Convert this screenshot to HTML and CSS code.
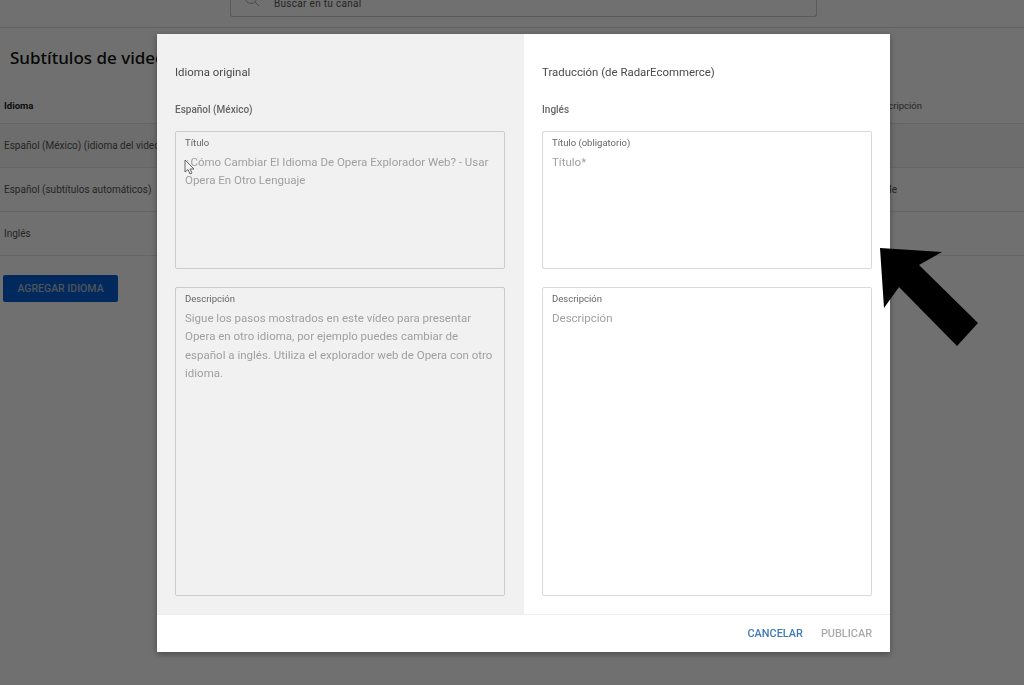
FILE: index.html
```html
<!DOCTYPE html>
<html lang="es">
  <head>
    <meta charset="UTF-8" />
    <meta name="viewport" content="width=device-width, initial-scale=1.0" />
    <title>Subtítulos de video</title>
    <link rel="stylesheet" href="styles.css">
  </head>
  <body>
    <!-- pagina de fondo -->
    <header class="topbar">
      <div class="search">
        <svg class="search-icon" width="18" height="18" viewBox="0 0 18 18"><circle cx="7" cy="5" r="5.500" fill="none" stroke="#aaa" stroke-width="1"/><path d="M11 9l4 4" stroke="#aaa"/></svg>
        <span>Buscar en tu canal</span>
      </div>
    </header>

    <main class="page">
      <h1>Subtítulos de video</h1>
      <div class="table-head">
        <span class="col-lang">Idioma</span>
        <span class="col-desc">Descripción</span>
      </div>
      <div class="row row-first">Español (México) (idioma del video)</div>
      <div class="row">
        <span>Español (subtítulos automáticos)</span>
        <span>Publicado por YouTube: Disponible</span>
      </div>
      <div class="row">Inglés</div>
      <button class="add-btn">AGREGAR IDIOMA</button>
    </main>

    <div class="overlay"></div>

    <!-- modal -->
    <section class="modal">
      <div class="modal-body">
        <div class="pane pane-original">
          <h2>Idioma original</h2>
          <h3>Español (México)</h3>
          <div class="field field-title">
            <label>Título</label>
            <p>¿Cómo Cambiar El Idioma De Opera Explorador Web? - Usar Opera En Otro Lenguaje</p>
          </div>
          <div class="field field-desc">
            <label>Descripción</label>
            <p>Sigue los pasos mostrados en este vídeo para presentar Opera en otro idioma, por ejemplo puedes cambiar de español a inglés. Utiliza el explorador web de Opera con otro idioma.</p>
          </div>
        </div>
        <div class="pane pane-translation">
          <h2>Traducción (de RadarEcommerce)</h2>
          <h3>Inglés</h3>
          <div class="field field-title">
            <label>Título (obligatorio)</label>
            <p>Título*</p>
          </div>
          <div class="field field-desc">
            <label>Descripción</label>
            <p>Descripción</p>
          </div>
        </div>
      </div>
      <footer class="modal-footer">
        <button class="link-btn">CANCELAR</button>
        <button class="link-btn link-btn-off">PUBLICAR</button>
      </footer>
    </section>

    <!-- cursor del raton -->
    <svg class="cursor" width="12" height="17" viewBox="0 0 12 17"><path d="M1 1v12l3-2.500 2 4.500 2-1-2-4h4z" fill="#f4f4f4" stroke="#666" stroke-width="1"/></svg>

    <!-- flecha negra -->
    <svg class="arrow" width="100" height="100" viewBox="0 0 100 100"><path d="M0 0L62 4L39 17L98 75L77 98L19 39L4 60Z" fill="#000"/></svg>
  </body>
</html>
```

FILE: styles.css
```css
/* pagina de fondo */
body {
  margin: 0;
  height: 685px;
  overflow: hidden;
  background-color: #fff;
  font-family: "Roboto", "Liberation Sans", sans-serif;
  color: #222;
}

.topbar {
  height: 27px;
  border-bottom: 1px solid #ddd;
  display: flex;
  justify-content: center;
}

.search {
  width: 585px;
  height: 16px;
  margin-left: 23px;
  border: 1px solid #ccc;
  border-top: 0;
  border-radius: 0 0 3px 3px;
  display: flex;
  align-items: flex-start;
  overflow: hidden;
  font-size: 10px;
  color: #555;
  letter-spacing: 0.3px;
}

.search-icon {
  margin: -7px 11px 0 13px;
  flex: none;
}

.search span {
  margin-top: -4px;
  margin-left: 1px;
  line-height: 15px;
}

.page {
  padding: 18px 0 0 3px;
}

h1 {
  margin: 0 0 0 7px;
  font-family: "Noto Sans", sans-serif;
  font-size: 17px;
  font-weight: 500;
  line-height: 24px;
  color: #111;
}

.table-head {
  display: flex;
  justify-content: space-between;
  height: 36px;
  margin: 17px 0 0 -3px;
  padding: 0 102px 0 4px;
  align-items: center;
  font-size: 9.500px;
  border-bottom: 1px solid #e4e4e4;
}

.col-lang {
  font-weight: 700;
}

.col-desc {
  color: #555;
}

.row {
  display: flex;
  justify-content: space-between;
  align-items: center;
  height: 43px;
  margin-left: -3px;
  padding: 0 127px 0 4px;
  font-size: 10px;
  color: #555;
  border-bottom: 1px solid #e8e8e8;
}

.row-first {
  background-color: #f8f8f8;
}

.add-btn {
  display: block;
  width: 115px;
  height: 27px;
  margin-top: 19px;
  border: 0;
  border-radius: 2px;
  background-color: #065fd4;
  color: #aebed2;
  font-family: inherit;
  font-size: 10.500px;
  font-weight: 500;
}

/* capa oscura */
.overlay {
  position: fixed;
  inset: 0;
  background-color: rgba(0, 0, 0, 0.56);
}

/* modal */
.modal {
  position: absolute;
  left: 157px;
  top: 34px;
  width: 733px;
  height: 618px;
  display: flex;
  flex-direction: column;
  background-color: #fff;
  box-shadow: 0 2px 6px rgba(0, 0, 0, 0.35);
}

.modal-body {
  flex: 1;
  display: flex;
  min-height: 0;
}

.pane {
  display: flex;
  flex-direction: column;
  box-sizing: border-box;
  padding: 0 18px;
}

.pane-original {
  width: 367px;
  padding-right: 19px;
  background-color: #f1f1f1;
}

.pane-translation {
  width: 366px;
}

h2 {
  margin: 30px 0 0;
  font-size: 11.400px;
  font-weight: 400;
  line-height: 16px;
  color: #4a4a4a;
}

h3 {
  margin: 23px 0 0;
  font-size: 10px;
  font-weight: 500;
  line-height: 14px;
  color: #666;
}

.field {
  box-sizing: border-box;
  border: 1px solid #d9d9d9;
  border-radius: 2px;
  padding: 4px 9px;
}

.field-title {
  height: 138px;
  margin-top: 14px;
}

.field-desc {
  height: 309px;
  margin-top: 18px;
}

.field label {
  display: block;
  font-size: 9.500px;
  line-height: 13px;
  color: #666;
}

.field p {
  margin: 4px 0 0;
  font-size: 11.500px;
  line-height: 18.400px;
  color: #a0a0a0;
}

.pane-original .field {
  border-color: #ccc;
}

.modal-footer {
  height: 37px;
  display: flex;
  justify-content: flex-end;
  align-items: center;
  gap: 18px;
  padding-right: 18px;
  border-top: 1px solid #eee;
}

.link-btn {
  border: 0;
  padding: 0;
  background: none;
  font-family: inherit;
  font-size: 10.900px;
  font-weight: 500;
  color: #3d7ab8;
}

.link-btn-off {
  color: #aaa;
}

/* elementos encima */
.cursor {
  position: absolute;
  left: 184px;
  top: 159px;
}

.arrow {
  position: absolute;
  left: 880px;
  top: 248px;
}
```
